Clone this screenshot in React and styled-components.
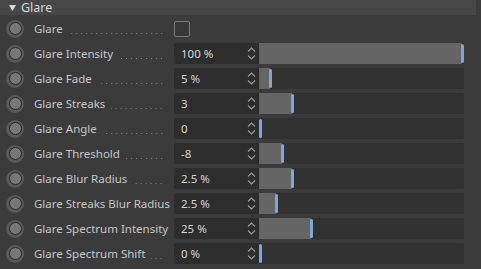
import React from "react";
import styled, { createGlobalStyle } from "styled-components";

const Global = createGlobalStyle`
  html, body { margin: 0; padding: 0; background: #3b3b3b; }
  body { font-family: "Noto Sans", "Open Sans", sans-serif; }
`;

const Panel = styled.div`
  width: 481px;
  height: 269px;
  background: #3b3b3b;
  overflow: hidden;
`;

const Header = styled.div`
  height: 15px;
  margin-right: 5px;
  background: #474747;
  display: flex;
  align-items: center;
  gap: 5px;
  padding-left: 9px;
  color: #d6d6d6;
  font-size: 12.5px;
  line-height: 15px;
`;

const List = styled.div`
  display: flex;
  flex-direction: column;
  padding-top: 1px;
`;

const Row = styled.div`
  height: 25px;
  display: grid;
  grid-template-columns: 34px 140px 290px;
  align-items: center;
`;

const Knob = styled.span`
  justify-self: start;
  margin-left: 6px;
  width: 18px;
  height: 18px;
  border-radius: 50%;
  background: #585858;
  display: flex;
  align-items: center;
  justify-content: center;
  &::after {
    content: "";
    width: 11px;
    height: 11px;
    border-radius: 50%;
    background: #777777;
    border: 1.5px solid #2a2a2a;
  }
`;

const Label = styled.div`
  display: flex;
  align-items: center;
  color: #c6c6c6;
  font-size: 11.5px;
  white-space: nowrap;
  overflow: hidden;
  padding-right: 10px;
`;

const Leader = styled.span`
  flex: 1;
  height: 12px;
  margin-left: 6px;
  background-image: radial-gradient(circle, #808080 0.6px, transparent 1px);
  background-size: 5px 3px;
  background-repeat: repeat-x;
  background-position: right bottom;
`;

const Check = styled.span`
  width: 16px;
  height: 16px;
  box-sizing: border-box;
  border: 1px solid #7a7a7a;
  border-radius: 2px;
  background: #383838;
`;

const Field = styled.div`
  height: 21px;
  display: grid;
  grid-template-columns: 85px 1fr;
  border-radius: 3px;
  overflow: hidden;
  background: #2f2f2f;
`;

const Input = styled.div`
  display: flex;
  align-items: center;
  justify-content: space-between;
  padding: 0 3px 0 7px;
  background: #2d2d2d;
  color: #d4d4d4;
  font-size: 11.5px;
`;

const Track = styled.div`
  position: relative;
  background: #313131;
`;

const Fill = styled.div`
  position: absolute;
  left: 0;
  top: 0;
  bottom: 0;
  background: #656565;
`;

const Handle = styled.div`
  position: absolute;
  top: 1px;
  bottom: 1px;
  width: 3px;
  border-radius: 1.5px;
  background: #7fa6db;
`;

const Spin = () => (
  <svg width="9" height="17" viewBox="0 0 9 17" fill="none" stroke="#9c9c9c" strokeWidth="1.1">
    <path d="M1 6.5 L4.5 3 L8 6.5" />
    <path d="M1 10.5 L4.5 14 L8 10.5" />
  </svg>
);

const rows = [
  { label: "Glare", check: true },
  { label: "Glare Intensity", value: "100 %", p: 1 },
  { label: "Glare Fade", value: "5 %", p: 0.05 },
  { label: "Glare Streaks", value: "3", p: 0.16 },
  { label: "Glare Angle", value: "0", p: 0 },
  { label: "Glare Threshold", value: "-8", p: 0.107 },
  { label: "Glare Blur Radius", value: "2.5 %", p: 0.16 },
  { label: "Glare Streaks Blur Radius", value: "2.5 %", p: 0.08 },
  { label: "Glare Spectrum Intensity", value: "25 %", p: 0.25 },
  { label: "Glare Spectrum Shift", value: "0 %", p: 0 },
];

export default function App() {
  return (
    <Panel>
      <Global />
      <Header>
        <svg width="7" height="6" viewBox="0 0 7 6">
          <polygon points="0,0 7,0 3.5,6" fill="#d6d6d6" />
        </svg>
        Glare
      </Header>
      <List>
        {rows.map((r) => {
          const pos = `calc((100% - 3px) * ${r.p})`;
          return (
            <Row key={r.label}>
              <Knob />
              <Label>
                {r.label}
                <Leader />
              </Label>
              {r.check ? (
                <Check />
              ) : (
                <Field>
                  <Input>
                    <span>{r.value}</span>
                    <Spin />
                  </Input>
                  <Track>
                    {r.p > 0 && <Fill style={{ width: `calc(${pos} + 1px)` }} />}
                    <Handle style={{ left: pos }} />
                  </Track>
                </Field>
              )}
            </Row>
          );
        })}
      </List>
    </Panel>
  );
}
